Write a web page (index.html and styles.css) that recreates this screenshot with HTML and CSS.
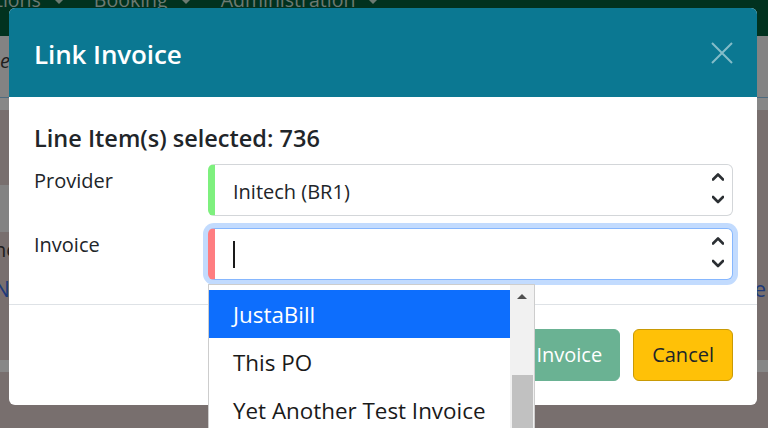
FILE: index.html
```html
<!DOCTYPE html>
<html lang="en">
<head>
<meta charset="utf-8">
<title>Link Invoice</title>
<link rel="stylesheet" href="styles.css">
</head>
<body>
<div class="page">
  <div class="bg-nav">
    <div class="nav-links">
      <span class="nav-item nav-first">tions<span class="nav-caret"></span></span>
      <span class="nav-item">Booking<span class="nav-caret"></span></span>
      <span class="nav-item">Administration<span class="nav-caret"></span></span>
    </div>
  </div>
  <div class="bg-crumb"><span class="crumb-text">e</span></div>
  <div class="bg-rule"></div>
  <div class="bg-strip"></div>
  <div class="bg-main">
    <div class="bg-side"></div>
    <div class="bg-line1"><span class="dark-text">nc</span></div>
    <div class="bg-line2"><span class="link-text link-left">N</span><span class="link-text">e</span></div>
  </div>
  <div class="bg-strip"></div>
</div>

<div class="modal">
  <div class="modal-header">
    <h5 class="modal-title">Link Invoice</h5>
    <svg class="btn-close" viewBox="0 0 22 22" aria-label="Close">
      <path d="M1 1 L21 21 M21 1 L1 21" stroke="#84bcc8" stroke-width="2" fill="none"/>
    </svg>
  </div>
  <div class="modal-body">
    <h6 class="selected-heading">Line Item(s) selected: 736</h6>
    <div class="form-row">
      <div class="form-label">Provider</div>
      <div class="select select-valid">
        <span class="select-value">Initech (BR1)</span>
        <svg class="chevrons" viewBox="0 0 12 34">
          <path d="M1 8.5 L6 3.5 L11 8.5 M1 26 L6 31 L11 26" stroke="#2b2f33" stroke-width="2.6" fill="none" stroke-linecap="round" stroke-linejoin="round"/>
        </svg>
      </div>
    </div>
    <div class="form-row">
      <div class="form-label">Invoice</div>
      <div class="select select-invalid">
        <span class="select-value"><span class="text-caret"></span></span>
        <svg class="chevrons" viewBox="0 0 12 34">
          <path d="M1 8.5 L6 3.5 L11 8.5 M1 26 L6 31 L11 26" stroke="#2b2f33" stroke-width="2.6" fill="none" stroke-linecap="round" stroke-linejoin="round"/>
        </svg>
      </div>
    </div>
  </div>
  <div class="modal-footer">
    <button class="btn btn-success">Link Invoice</button>
    <button class="btn btn-warning">Cancel</button>
  </div>
</div>

<div class="dropdown">
  <ul class="dd-list">
    <li class="dd-item active">JustaBill</li>
    <li class="dd-item">This PO</li>
    <li class="dd-item">Yet Another Test Invoice</li>
  </ul>
  <div class="scrollbar">
    <div class="sb-up"><span class="sb-arrow"></span></div>
    <div class="sb-thumb"></div>
  </div>
</div>
</body>
</html>
```
FILE: styles.css
```css
* { box-sizing: border-box; }
html, body { margin: 0; padding: 0; }
body {
  width: 768px;
  height: 428px;
  overflow: hidden;
  position: relative;
  background: #786f6e;
  font-family: "Open Sans", "Noto Sans", sans-serif;
  color: #212529;
}

/* dimmed page behind the modal */
.bg-nav { height: 36px; background: #01321f; overflow: hidden; }
.nav-links {
  display: flex;
  gap: 30px;
  margin-top: -10px;
  margin-left: -4px;
  font-size: 19.5px;
  line-height: 20px;
  color: #6c7a72;
  white-space: nowrap;
}
.nav-caret {
  display: inline-block;
  width: 0; height: 0;
  margin-left: 13px;
  vertical-align: 3px;
  border-top: 5px solid #6c7a72;
  border-left: 5px solid transparent;
  border-right: 5px solid transparent;
}
.bg-crumb { height: 61px; background: #838383; padding-top: 13px; font-size: 20px; line-height: 24px; }
.crumb-text { font-style: italic; color: #1f1f1f; }
.bg-rule { height: 1px; background: #4d6b7f; }
.bg-strip { height: 12px; background: #878787; }
.bg-main { height: 250px; overflow: hidden; font-size: 20px; line-height: 26px; }
.bg-side { margin-top: 75px; height: 47px; width: 300px; background: #838383; }
.bg-line1 { margin-top: 5px; margin-left: -6px; }
.dark-text { color: #1e1e1e; }
.bg-line2 { margin-top: 13px; display: flex; justify-content: space-between; padding-right: 2px; font-size: 21px; }
.link-text { color: #203a7a; }
.link-left { margin-left: -6px; }

/* modal */
.modal {
  position: absolute;
  top: 8px;
  left: 9px;
  width: 748px;
  height: 397px;
  background: #fff;
  border-radius: 6px;
  overflow: hidden;
  display: flex;
  flex-direction: column;
}
.modal-header {
  flex: none;
  height: 89px;
  background: #0b7892;
  display: flex;
  align-items: center;
  justify-content: space-between;
  padding: 2px 24px 0 25px;
}
.modal-title { margin: 0; font-size: 26px; font-weight: 600; line-height: 32px; color: #fff; letter-spacing: -0.1px; }
.btn-close { width: 22px; height: 22px; display: block; margin-top: -2px; }

.modal-body { flex: none; height: 207px; padding: 26px 24px 0 25px; }
.selected-heading { margin: 0 0 11px; font-size: 23.5px; font-weight: 600; line-height: 30px; color: #212529; }
.form-row { display: grid; grid-template-columns: 174px 525px; margin-bottom: 12px; }
.form-label { padding-top: 1px; font-size: 20px; line-height: 32px; color: #212529; }
.select {
  height: 52px;
  border: 1px solid #d3d6d9;
  border-left: 7px solid #7ef07e;
  border-radius: 6px;
  display: flex;
  align-items: center;
  padding: 2px 8px 0 18px;
  font-size: 20px;
  color: #212529;
  background: #fff;
}
.select-invalid {
  border-color: #86b7fe;
  border-left-color: #fe7d81;
  box-shadow: 0 0 0 5px #c2dbfe;
}
.select-value { flex: 1; display: flex; align-items: center; }
.text-caret { display: block; width: 2px; height: 27px; background: #1a1a1a; margin-top: -2px; }
.chevrons { flex: none; width: 12px; height: 34px; align-self: flex-start; margin-top: 4px; }

.modal-footer {
  flex: 1;
  border-top: 1px solid #dee2e6;
  display: flex;
  justify-content: flex-end;
  align-items: flex-start;
  gap: 13px;
  padding: 24px 24px 0;
}
.btn {
  height: 52px;
  border-radius: 6px;
  font-family: inherit;
  font-size: 20px;
  line-height: 48px;
  padding: 0 17px;
  margin: 0;
  cursor: pointer;
}
.btn-success { background: #6ab293; border: 1px solid #6ab293; color: #fff; }
.btn-warning { background: #ffc107; border: 1px solid #c99a05; color: #212529; padding: 0 18px; }

/* open native-like dropdown list */
.dropdown {
  position: absolute;
  left: 208px;
  top: 284px;
  width: 327px;
  height: 150px;
  background: #fff;
  border: 1px solid #cdcdcd;
  display: flex;
}
.dd-list { flex: 1; margin: 0; padding: 5px 0 0; list-style: none; }
.dd-item {
  height: 48px;
  padding: 1px 0 0 24px;
  font-size: 22.4px;
  line-height: 47px;
  color: #1a1a1a;
  white-space: nowrap;
}
.dd-item.active { background: #0d6efd; color: #fff; }
.scrollbar { flex: none; width: 24px; background: #f1f1f1; display: flex; flex-direction: column; }
.sb-up { height: 18px; display: flex; justify-content: center; padding-top: 9px; }
.sb-arrow {
  width: 0; height: 0;
  border-left: 5.5px solid transparent;
  border-right: 5.5px solid transparent;
  border-bottom: 5px solid #505050;
}
.sb-thumb { margin: 76px 1px 0 2px; height: 200px; background: #c1c1c1; }
```
